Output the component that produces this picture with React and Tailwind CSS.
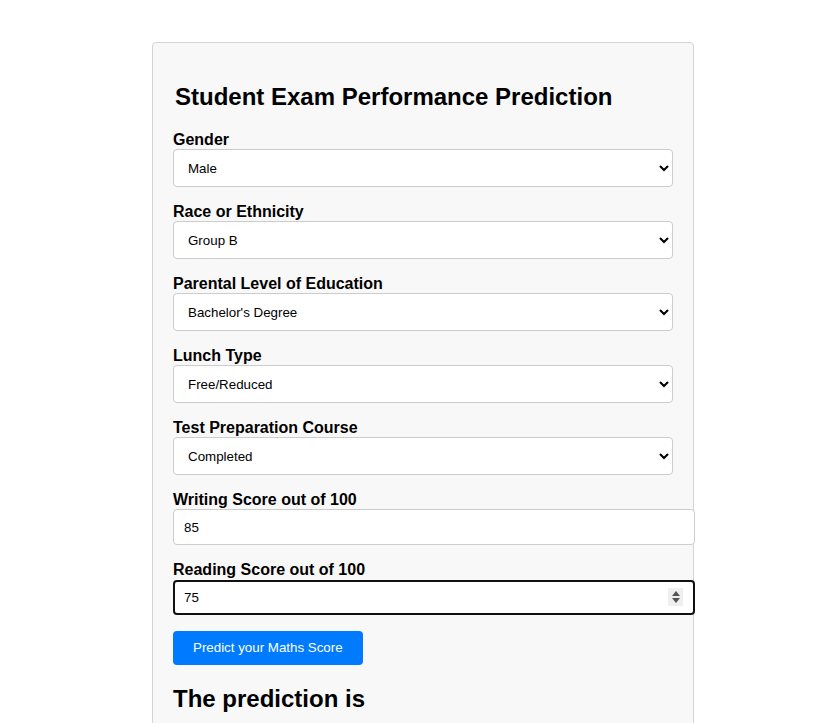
import { useState } from "react";

const selects = [
  { label: "Gender", value: "Male", options: ["Male", "Female"] },
  { label: "Race or Ethnicity", value: "Group B", options: ["Group A", "Group B", "Group C", "Group D", "Group E"] },
  {
    label: "Parental Level of Education",
    value: "Bachelor's Degree",
    options: ["Associate's Degree", "Bachelor's Degree", "High School", "Master's Degree", "Some College", "Some High School"],
  },
  { label: "Lunch Type", value: "Free/Reduced", options: ["Free/Reduced", "Standard"] },
  { label: "Test Preparation Course", value: "Completed", options: ["None", "Completed"] },
];

export default function App() {
  const [writing, setWriting] = useState("85");
  const [reading, setReading] = useState("75");

  return (
    <div className="min-h-[723px] bg-white pt-[42px] font-['Liberation_Sans',Arial,sans-serif] text-black">
      <div className="ml-[152px] w-[542px] rounded-[4px] border border-[#d4d4d4] bg-[#f8f8f8] px-[20px] pt-[20px] pb-[40px]">
        <h2 className="my-[20px] pl-[2px] text-[24px] leading-[28px] font-bold">Student Exam Performance Prediction</h2>

        {selects.map((s) => (
          <div key={s.label} className="mb-[16px]">
            <label className="block text-[16px] leading-[18px] font-bold">{s.label}</label>
            <select
              defaultValue={s.value}
              className="block h-[38px] w-[500px] rounded-[4px] border border-[#cccccc] bg-white px-[10px] text-[13.33px] text-black"
            >
              {s.options.map((o) => (
                <option key={o}>{o}</option>
              ))}
            </select>
          </div>
        ))}

        <div className="mb-[16px]">
          <label className="block text-[16px] leading-[18px] font-bold">Writing Score out of 100</label>
          <input
            type="number"
            value={writing}
            onChange={(e) => setWriting(e.target.value)}
            className="block h-[36px] w-[522px] rounded-[4px] border border-[#cccccc] bg-white px-[10px] text-[13.33px] outline-none"
          />
        </div>

        <div className="mb-[16px]">
          <label className="block text-[16px] leading-[18px] font-bold">Reading Score out of 100</label>
          <div className="relative mt-[1px] w-[522px]">
            <input
              type="number"
              value={reading}
              onChange={(e) => setReading(e.target.value)}
              className="block h-[35px] w-[522px] appearance-none rounded-[4px] border-2 border-[#101010] bg-white px-[9px] text-[13.33px] outline-none [&::-webkit-inner-spin-button]:appearance-none"
            />
            <span className="absolute top-[8px] right-[12px] flex h-[18px] w-[15px] flex-col items-center justify-center gap-[2px] bg-[#efefef]">
              <svg width="8" height="5" viewBox="0 0 8 5">
                <path d="M0 5 L4 0 L8 5 Z" fill="#555" />
              </svg>
              <svg width="8" height="5" viewBox="0 0 8 5">
                <path d="M0 0 L4 5 L8 0 Z" fill="#555" />
              </svg>
            </span>
          </div>
        </div>

        <button className="h-[34px] rounded-[4px] bg-[#007bff] px-[20px] text-[13.33px] text-white">
          Predict your Maths Score
        </button>

        <h2 className="mt-[20px] text-[24px] leading-[28px] font-bold">The prediction is</h2>
      </div>
    </div>
  );
}
